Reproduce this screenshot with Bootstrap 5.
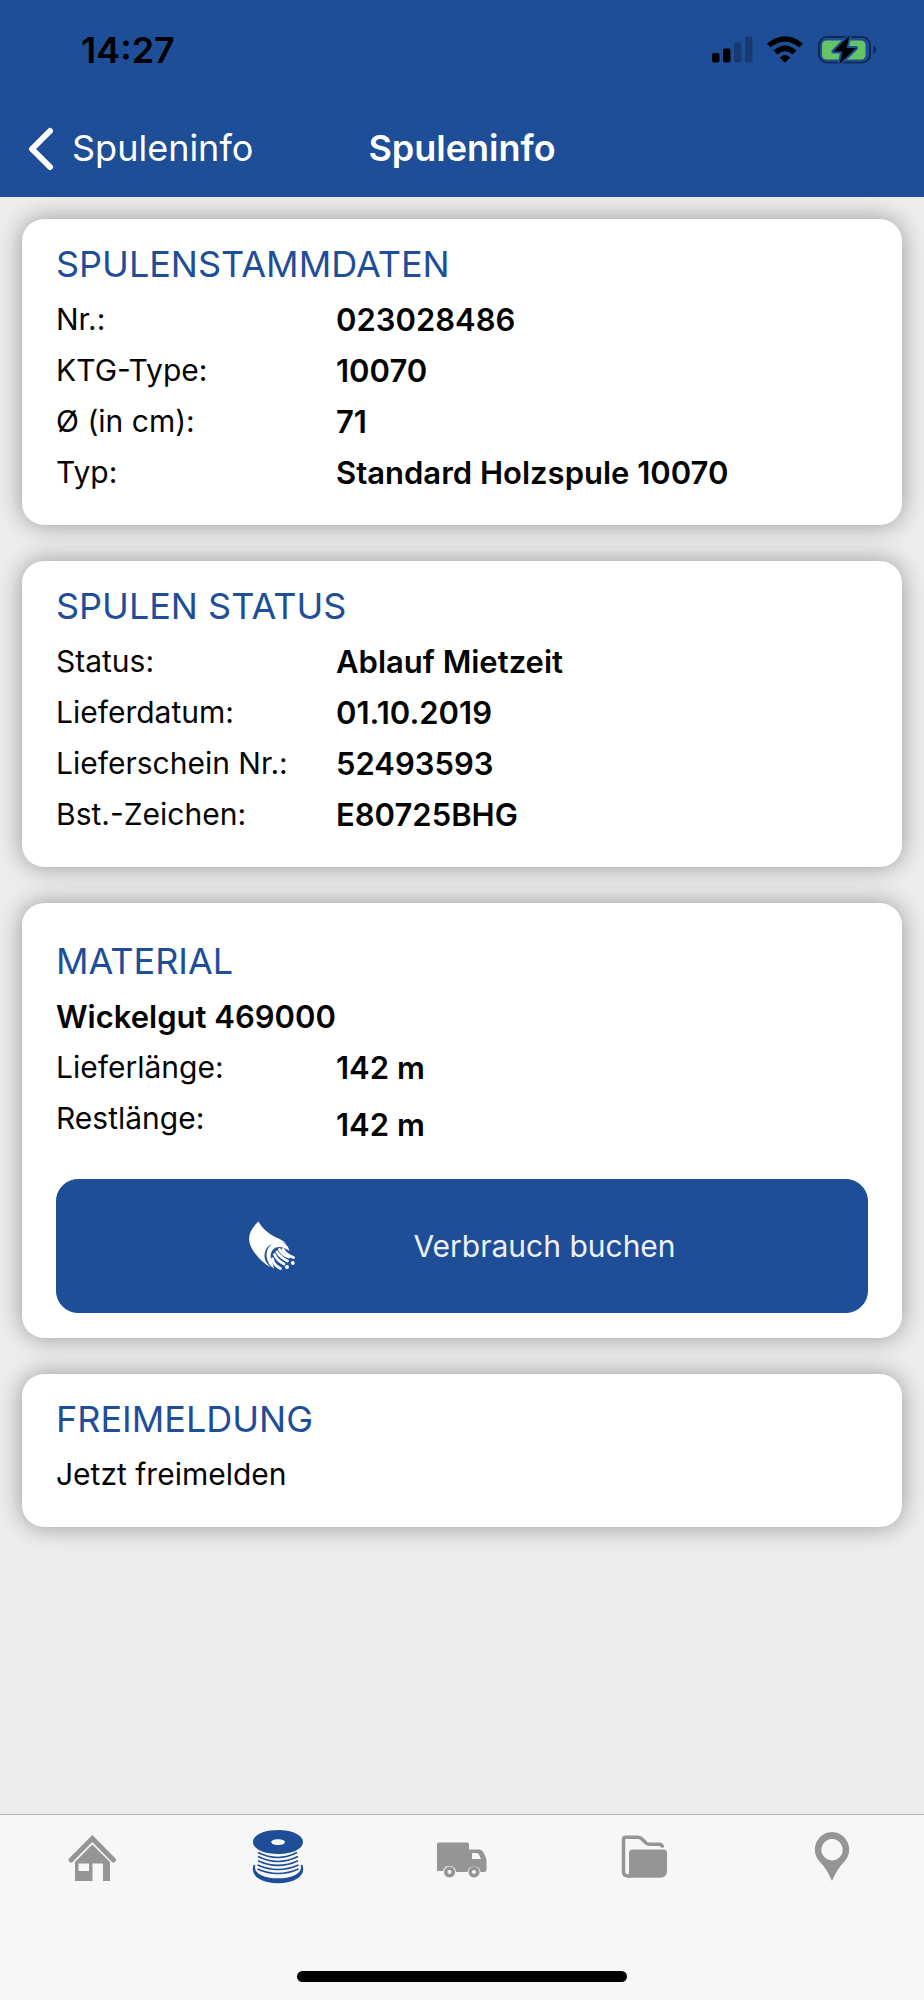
<!DOCTYPE html>
<html lang="de">
<head>
<meta charset="utf-8">
<meta name="viewport" content="width=device-width, initial-scale=1">
<title>Spuleninfo</title>
<link href="https://cdn.jsdelivr.net/npm/bootstrap@5.3.0/dist/css/bootstrap.min.css" rel="stylesheet">
<style>
  :root { --brand: #1f4e98; --muted: #959595; }
  body { font-family: Inter, "Liberation Sans", sans-serif; font-size: 30px; line-height: 51px; color: #050505; background: #ededed; }
  .app-header { background: var(--brand); }
  .status-bar { height: 100px; padding: 0 48px 0 81px; color: #000; }
  .clock { font-size: 36px; }
  .title-bar { height: 97px; padding: 0 27px; font-size: 36px; color: #fff; }
  .title-bar > * { flex: 1 1 0; }
  .title-bar h1 { font-size: 36px; line-height: 51px; }
  .back-link { gap: 18px; }
  .panels { padding: 22px 22px 36px; gap: 36px; }
  .panel { border: 0; border-radius: 22px; padding: 20px 34px 27px; box-shadow: 0 0 25px rgba(0, 0, 0, .37); }
  .panel-material { padding: 33px 34px 25px; }
  .panel h2 { font-size: 36px; font-weight: 400; line-height: 51px; margin: 0 0 4px; color: var(--brand); }
  .panel dt { flex: 0 0 280px; font-weight: 400; }
  .panel dd, .wound-item { margin: 0; font-size: 31px; font-weight: 600; }
  .remaining dd { padding-top: 6px; margin-bottom: -6px; }
  .btn-book { height: 134px; margin-top: 35px; gap: 118px; border-radius: 22px; font-size: 30px; --bs-btn-bg: var(--brand); --bs-btn-color: #eef2f8; --bs-btn-border-color: var(--brand); --bs-btn-hover-bg: #1a4486; --bs-btn-hover-color: #fff; --bs-btn-active-bg: #173c77; }
  .tab-bar { height: 186px; background: #f7f7f7; border-top: 1px solid #b4b4b4; }
  .tab-bar a { color: var(--muted); padding-top: 13px; line-height: 0; }
  .tab-bar a.active { color: var(--brand); }
  .home-indicator { width: 330px; height: 11px; border-radius: 6px; background: #000; margin-bottom: 18px; }
</style>
</head>
<body>
<div class="min-vh-100 d-flex flex-column">
  <header class="app-header">
    <div class="status-bar d-flex align-items-center justify-content-between">
      <span class="clock fw-semibold">14:27</span>
      <svg width="166" height="30" viewBox="0 0 166 30" aria-hidden="true">
        <g transform="translate(2 1)">
          <rect x="0" y="17" width="7.500" height="9.500" rx="2"/>
          <rect x="11" y="12.500" width="7.500" height="14" rx="2"/>
          <g opacity=".25"><rect x="22" y="6.500" width="7.500" height="20" rx="2"/><rect x="33" y="0.500" width="7.500" height="26" rx="2"/></g>
        </g>
        <path d="M57 8.500Q75-6 93 8.500L89.500 12.500Q75 1 60.500 12.500ZM63.500 15.500Q75 5.500 86.500 15.500L82.500 19.500Q75 13 67.500 19.500ZM69.700 22.500Q75 17.500 80.300 22.500L75 27.700Z"/>
        <g transform="translate(0 1)">
          <rect x="109" y="1" width="51" height="25.500" rx="8" fill="none" stroke="#000" stroke-width="2" opacity=".45"/>
          <path d="M163.500 9.500Q166.500 11 166 14Q165.800 17.500 163.500 18.500Z" opacity=".45"/>
          <rect x="112" y="4.500" width="43.500" height="19" rx="4.500" fill="#65c466"/>
          <path d="M139.500-.5L123.500 15.500H132.500L129.500 28L146 12H136.500Z" stroke="#1f4e98" stroke-width="4" paint-order="stroke" stroke-linejoin="round"/>
        </g>
      </svg>
    </div>
    <nav class="title-bar d-flex align-items-center" aria-label="Navigation">
      <div class="d-flex">
        <a href="#" class="back-link d-flex align-items-center text-white text-decoration-none">
          <svg width="27" height="44" viewBox="0 0 27 44" fill="none" stroke="currentColor" stroke-width="6" stroke-linecap="round" stroke-linejoin="round" aria-hidden="true"><path d="M23 4L5 22L23 40"/></svg>
          Spuleninfo
        </a>
      </div>
      <h1 class="m-0 fw-semibold text-center">Spuleninfo</h1>
      <span></span>
    </nav>
  </header>

  <main class="panels flex-grow-1 d-flex flex-column">
    <section class="panel card">
      <h2>SPULENSTAMMDATEN</h2>
      <dl class="m-0">
        <div class="d-flex"><dt>Nr.:</dt><dd>023028486</dd></div>
        <div class="d-flex"><dt>KTG-Type:</dt><dd>10070</dd></div>
        <div class="d-flex"><dt>Ø (in cm):</dt><dd>71</dd></div>
        <div class="d-flex"><dt>Typ:</dt><dd>Standard Holzspule 10070</dd></div>
      </dl>
    </section>

    <section class="panel card">
      <h2>SPULEN STATUS</h2>
      <dl class="m-0">
        <div class="d-flex"><dt>Status:</dt><dd>Ablauf Mietzeit</dd></div>
        <div class="d-flex"><dt>Lieferdatum:</dt><dd>01.10.2019</dd></div>
        <div class="d-flex"><dt>Lieferschein Nr.:</dt><dd>52493593</dd></div>
        <div class="d-flex"><dt>Bst.-Zeichen:</dt><dd>E80725BHG</dd></div>
      </dl>
    </section>

    <section class="panel panel-material card">
      <h2>MATERIAL</h2>
      <p class="wound-item">Wickelgut 469000</p>
      <dl class="m-0">
        <div class="d-flex"><dt>Lieferlänge:</dt><dd>142 m</dd></div>
        <div class="remaining d-flex"><dt>Restlänge:</dt><dd>142 m</dd></div>
      </dl>
      <button type="button" class="btn btn-book w-100 d-flex align-items-center justify-content-center">
        <svg width="47" height="50" viewBox="0 0 47 50" fill="#fff" stroke="#fff" stroke-width="0" aria-hidden="true">
          <path d="M10.500 0.500Q15 9.500 27 16Q35 19 38 22.500C28 18 16.500 24 16.500 35Q16.500 41 22.500 46Q14 42 6 31C-2 20 0 10 10.500 0.500Z"/>
          <path d="M41.500 30Q39 20.500 30.500 20.500C23 20.500 18.200 28 18.500 35Q19.500 44 26 47.500L24 40Q21 33 25 28.500Q31 23 41.500 30Z"/>
          <g fill="none" stroke-width="2.800" stroke-linecap="round"><path d="M24.500 38Q25.500 44 32.500 47.500"/><path d="M26.500 33.500Q29 39.500 36 43"/><path d="M29 31Q33 37 39.500 40"/><path d="M31.500 28.500Q35 34.500 41 36"/><path d="M35 28.500Q38 34 45.500 36.500"/></g>
          <circle cx="39" cy="46" r="2"/><circle cx="44.800" cy="42" r="1.900"/>
        </svg>
        Verbrauch buchen
      </button>
    </section>

    <section class="panel card">
      <h2>FREIMELDUNG</h2>
      <a href="#" class="text-reset text-decoration-none">Jetzt freimelden</a>
    </section>
  </main>

  <footer class="tab-bar d-flex flex-column justify-content-between align-items-center">
    <nav class="w-100 d-flex" aria-label="Hauptmenü">
      <a href="#" class="flex-fill text-center" aria-label="Start">
        <svg width="56" height="56" viewBox="0 0 56 56" fill="currentColor" aria-hidden="true">
          <path d="M7 32L28.300 10.500L49.500 32" fill="none" stroke="currentColor" stroke-width="5" stroke-linecap="round" stroke-linejoin="miter"/>
          <path fill-rule="evenodd" d="M28.300 16.500L46 34V53H39V35.500H28.500V53H11V34ZM14.500 35.500V43H25V35.500Z"/>
        </svg>
      </a>
      <a href="#" class="active flex-fill text-center" aria-label="Spulen" aria-current="page">
        <svg width="56" height="56" viewBox="0 0 56 56" fill="currentColor" aria-hidden="true">
          <path fill-rule="evenodd" d="M29 2C43 2 54 7 54 14S43 26 29 26S4 21 4 14S15 2 29 2ZM29 11.200C25 11.200 22.300 12.300 22.300 14S25 17 29 17S36 15.700 36 14S33 11.200 29 11.200Z"/>
          <g fill="none" stroke="currentColor" stroke-width="1.700"><path d="M9 24.500Q29 34.500 48 24.500"/><path d="M9 28.500Q29 38.500 49 28.500"/><path d="M9 32.700Q29 42 49 32.700"/><path d="M8.500 37Q29 46 49.500 37"/><path d="M8.500 41Q29 50 49.500 41"/></g>
          <path d="M5.500 37C-3 60 61 60 52.500 37C58 56 0 56 5.500 37Z" stroke="currentColor" stroke-width="1.800"/>
        </svg>
      </a>
      <a href="#" class="flex-fill text-center" aria-label="Lieferung">
        <svg width="56" height="56" viewBox="0 0 56 56" fill="currentColor" aria-hidden="true">
          <path fill-rule="evenodd" d="M5 14.500H33Q35 14.500 35 16.500V21.500H45Q48 21.500 49.500 24.500L52 30Q52.500 31 52.500 33V42Q52.500 44 50.500 44H46.500A6.600 6.600 0 0 0 33.500 44H22A6.600 6.600 0 0 0 9 43H3V16.500Q3 14.500 5 14.500ZM38 25V31H47L45 26.500Q44.300 25 43 25Z"/>
          <path fill-rule="evenodd" d="M15.500 38.500a5.500 5.500 0 1 0 .1 0ZM15.500 42a2 2 0 1 1-.1 0ZM40 38.500a5.500 5.500 0 1 0 .1 0ZM40 42a2 2 0 1 1-.1 0Z"/>
        </svg>
      </a>
      <a href="#" class="flex-fill text-center" aria-label="Dokumente">
        <svg width="56" height="56" viewBox="0 0 56 56" fill="currentColor" aria-hidden="true">
          <path d="M12 48H9Q4.500 48 4.500 43.500V11.500Q4.500 9.300 6.500 9.300H19Q21.500 9.300 23.500 11.500L27 15Q28.500 16.300 31 16.300H40Q43.300 16.300 43.300 19.500" fill="none" stroke="currentColor" stroke-width="3.500"/>
          <path d="M13.500 21.500H44.500Q48 21.500 48 25V43Q48 49.700 41 49.700H9V47.500Q10 47 10 44V25Q10 21.500 13.500 21.500Z"/>
        </svg>
      </a>
      <a href="#" class="flex-fill text-center" aria-label="Standort">
        <svg width="56" height="56" viewBox="0 0 56 56" fill="currentColor" aria-hidden="true">
          <path fill-rule="evenodd" d="M28 4A17.500 17.500 0 0 1 40 34Q33 41 28 53Q23 41 16 34A17.500 17.500 0 0 1 28 4ZM28 11a10.700 10.700 0 1 0 .1 0Z"/>
        </svg>
      </a>
    </nav>
    <div class="home-indicator"></div>
  </footer>
</div>
<script src="https://cdn.jsdelivr.net/npm/bootstrap@5.3.0/dist/js/bootstrap.bundle.min.js"></script>
</body>
</html>
